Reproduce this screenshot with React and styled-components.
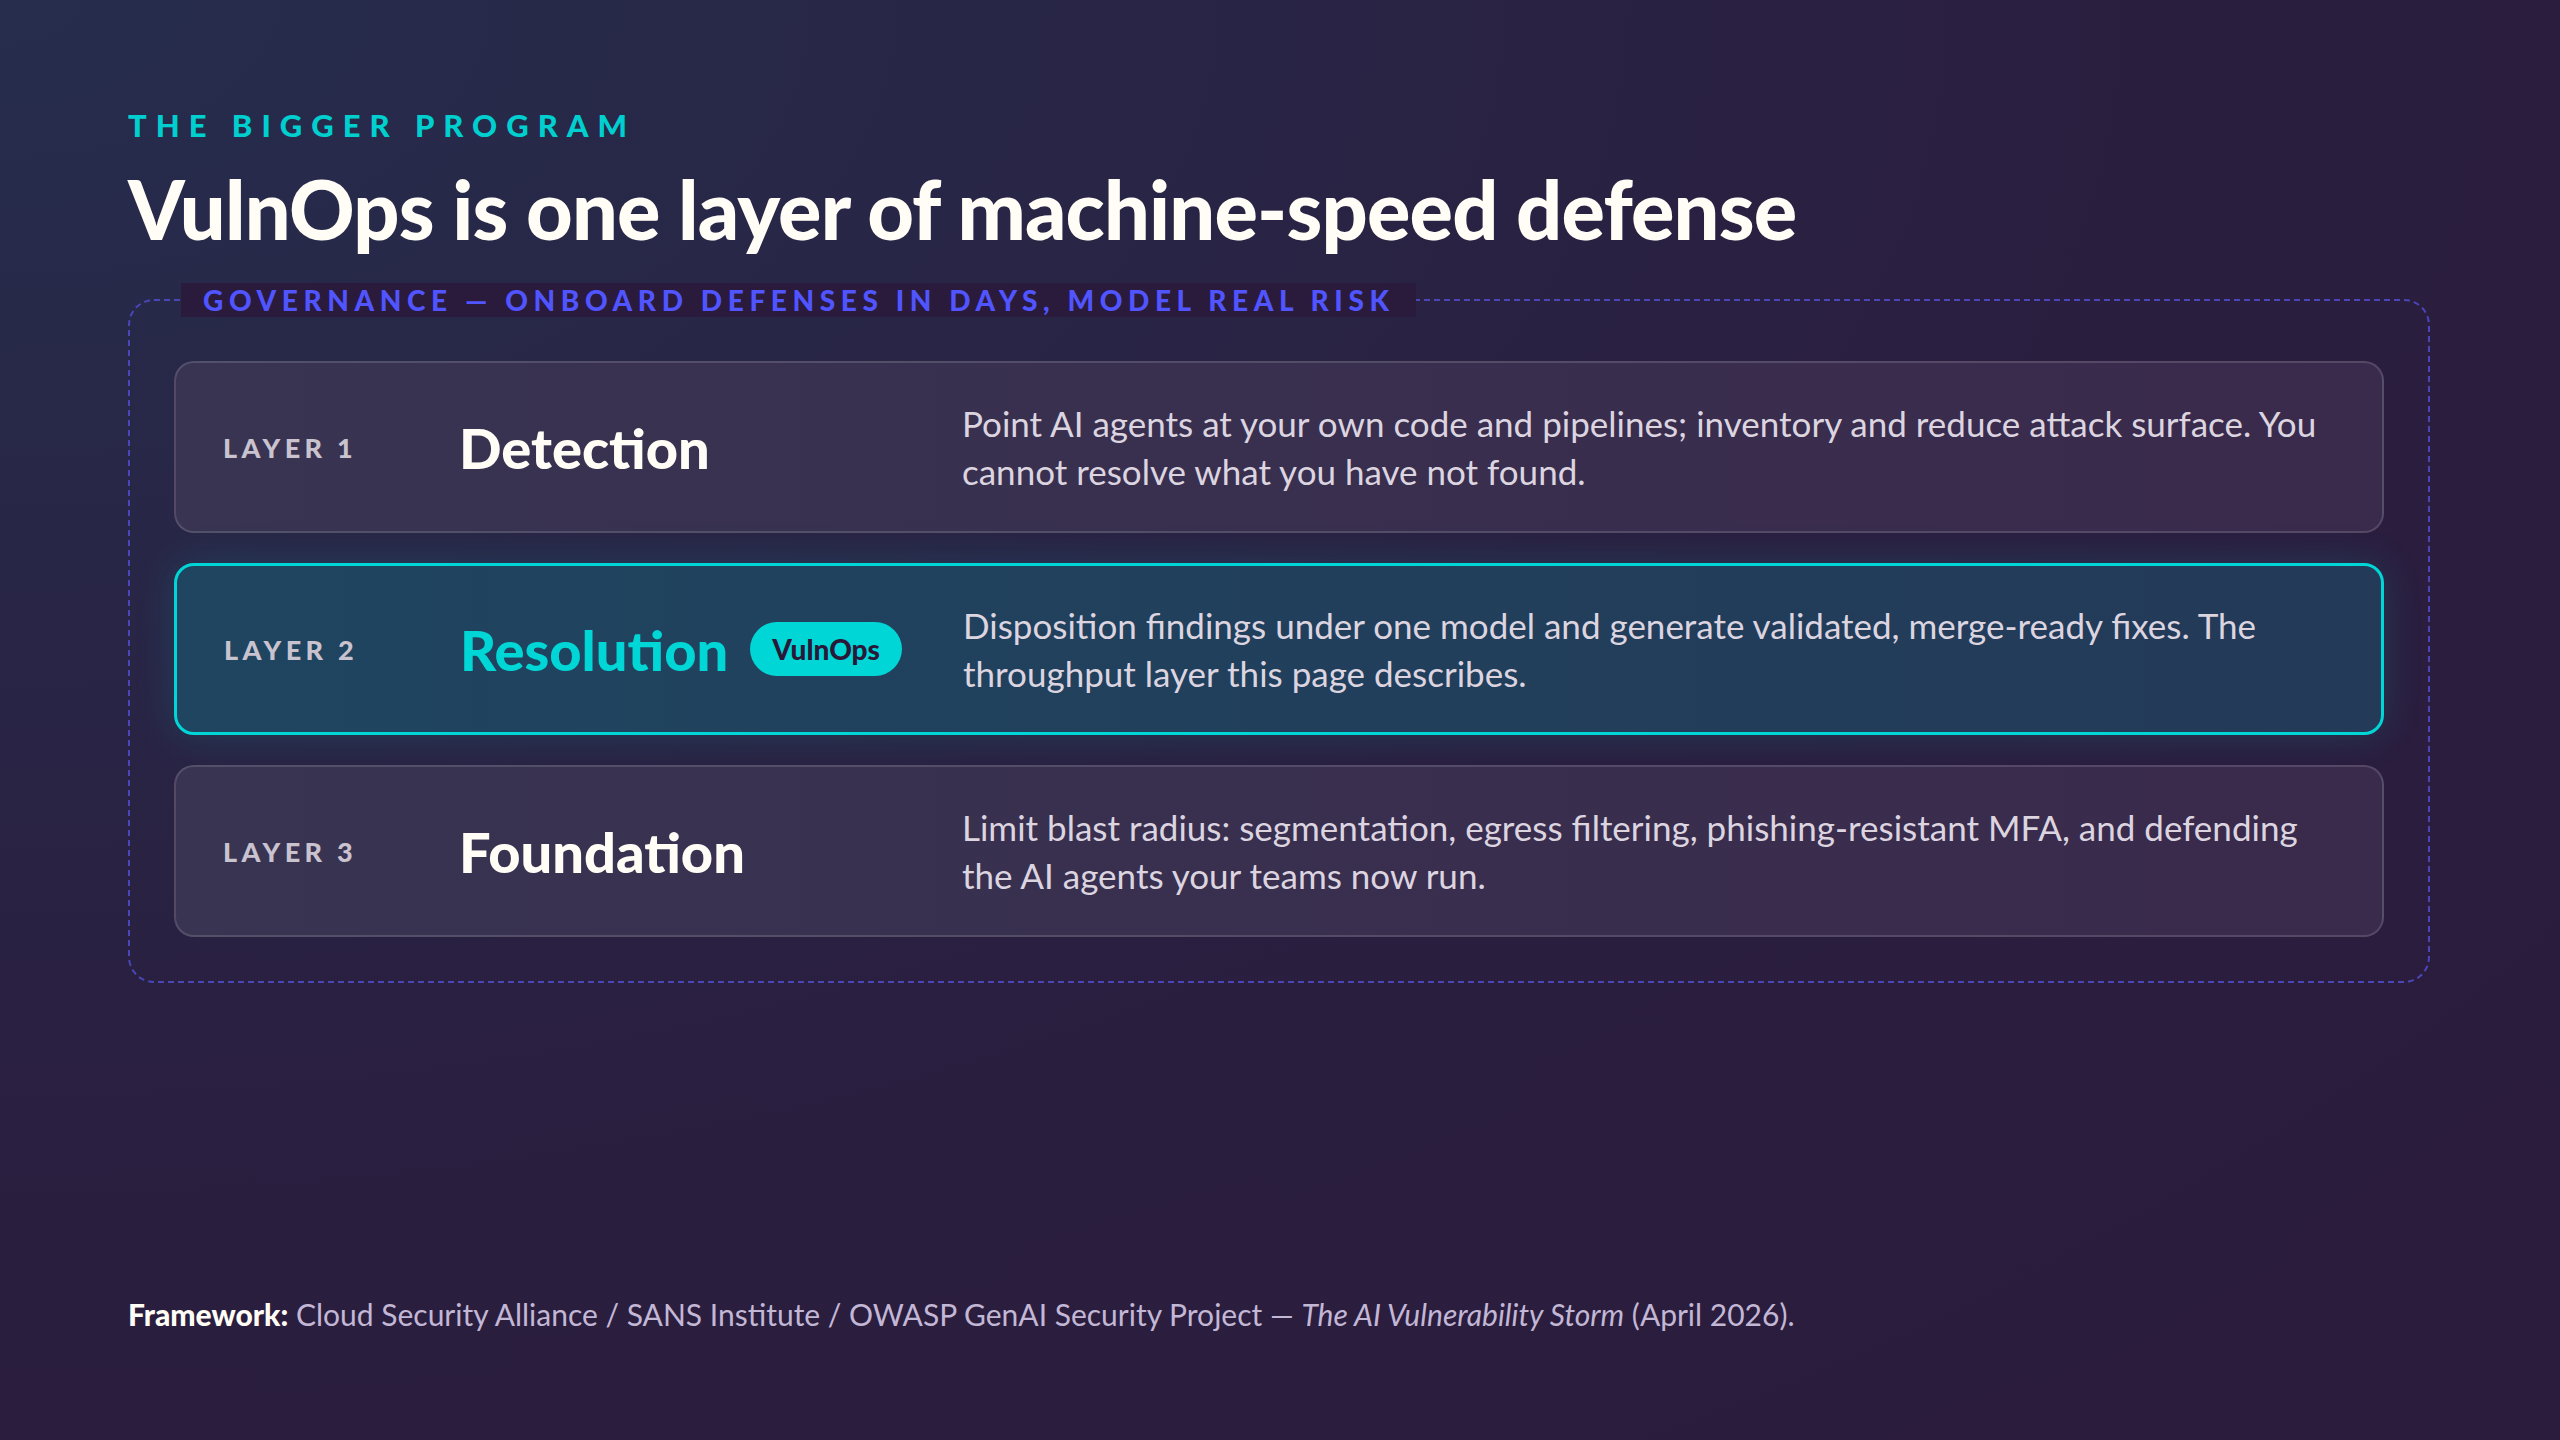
import React from "react"
import styled, { createGlobalStyle } from "styled-components"

const GlobalStyle = createGlobalStyle`
  html, body { margin: 0; padding: 0; }
  body {
    width: 2560px;
    height: 1440px;
    overflow: hidden;
    font-family: Lato, "Open Sans", sans-serif;
    background: radial-gradient(ellipse at 0% 0%, #262d4d 0%, #2a1f40 55%, #2b1b3c 100%);
  }
`

const Page = styled.div`
  width: 2560px;
  height: 1440px;
  box-sizing: border-box;
  padding: 106px 128px 0;
  display: flex;
  flex-direction: column;
`

const Eyebrow = styled.div`
  color: #00cfcf;
  font-size: 31px;
  font-weight: 900;
  letter-spacing: 0.29em;
`

const Title = styled.h1`
  margin: 20px 0 0;
  color: #fffdf5;
  font-size: 81px;
  font-weight: 900;
  letter-spacing: -0.01em;
  line-height: 1.1;
`

const Governance = styled.fieldset`
  margin: 30px 0 0;
  width: 2302px;
  box-sizing: border-box;
  border: 2px dashed #4a46b8;
  border-radius: 26px;
  padding: 44px 44px 44px;
  display: flex;
  flex-direction: column;
  gap: 30px;
`

const Legend = styled.legend`
  margin-left: 7px;
  padding: 0 22px;
  background: #2a1a3c;
  color: #5055ff;
  font-size: 28px;
  font-weight: 900;
  letter-spacing: 0.2em;
`

const Card = styled.div`
  display: grid;
  grid-template-columns: 236px 503px 1fr;
  align-items: center;
  height: 172px;
  box-sizing: border-box;
  padding: 0 60px 0 47px;
  border-radius: 20px;
  border: ${(p) => (p.active ? "3px solid #00d6d6" : "2px solid rgba(255,255,255,0.14)")};
  background: ${(p) => (p.active ? "linear-gradient(90deg, #1f4560, #233a58)" : "linear-gradient(90deg, #383452, #3a2a4c)")};
  box-shadow: ${(p) => (p.active ? "0 0 40px rgba(0,214,214,0.15)" : "none")};
`

const LayerLabel = styled.div`
  color: #c9c2cf;
  font-size: 27px;
  font-weight: 900;
  letter-spacing: 0.16em;
`

const LayerName = styled.div`
  display: flex;
  align-items: center;
  gap: 22px;
  color: ${(p) => (p.active ? "#00d6d6" : "#fffdf5")};
  font-size: 56px;
  font-weight: 900;
`

const Badge = styled.span`
  background: #00d6d6;
  color: #2a1838;
  font-size: 28px;
  font-weight: 900;
  padding: 10px 22px;
  border-radius: 28px;
`

const Desc = styled.div`
  color: #dcd5e0;
  font-size: 35px;
  line-height: 48px;
`

const Footer = styled.div`
  margin-top: auto;
  margin-bottom: 108px;
  color: #c3b7d6;
  font-size: 30px;
  b { color: #fffdf5; font-weight: 900; }
  i { font-style: italic; }
`

const layers = [
  {
    n: 1,
    name: "Detection",
    desc: "Point AI agents at your own code and pipelines; inventory and reduce attack surface. You cannot resolve what you have not found.",
  },
  {
    n: 2,
    name: "Resolution",
    badge: "VulnOps",
    active: true,
    desc: "Disposition findings under one model and generate validated, merge-ready fixes. The throughput layer this page describes.",
  },
  {
    n: 3,
    name: "Foundation",
    desc: "Limit blast radius: segmentation, egress filtering, phishing-resistant MFA, and defending the AI agents your teams now run.",
  },
]

export default function App() {
  return (
    <Page>
      <GlobalStyle />
      <Eyebrow>THE BIGGER PROGRAM</Eyebrow>
      <Title>VulnOps is one layer of machine-speed defense</Title>
      <Governance>
        <Legend>GOVERNANCE — ONBOARD DEFENSES IN DAYS, MODEL REAL RISK</Legend>
        {layers.map((l) => (
          <Card key={l.n} active={l.active}>
            <LayerLabel>LAYER {l.n}</LayerLabel>
            <LayerName active={l.active}>
              {l.name}
              {l.badge && <Badge>{l.badge}</Badge>}
            </LayerName>
            <Desc>{l.desc}</Desc>
          </Card>
        ))}
      </Governance>
      <Footer>
        <b>Framework:</b> Cloud Security Alliance / SANS Institute / OWASP GenAI Security Project — <i>The AI Vulnerability Storm</i> (April 2026).
      </Footer>
    </Page>
  )
}
